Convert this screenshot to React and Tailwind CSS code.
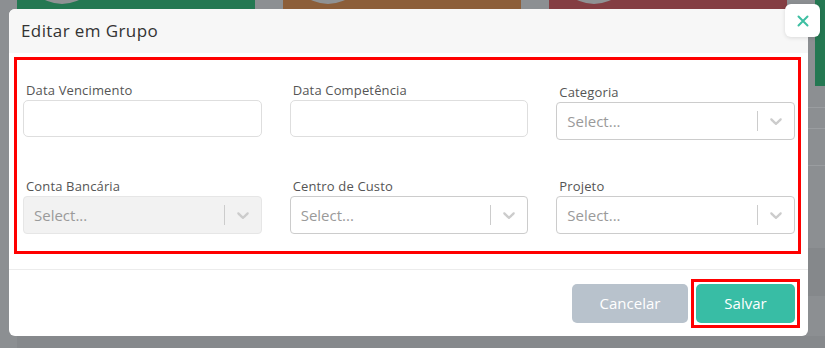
import React from "react";

function Chevron() {
  return (
    <svg width="20" height="20" viewBox="0 0 20 20" fill="#cccccc" aria-hidden="true">
      <path d="M4.516 7.548c0.436-0.446 1.043-0.481 1.576 0l3.908 3.747 3.908-3.747c0.533-0.481 1.141-0.446 1.574 0 0.436 0.445 0.408 1.197 0 1.615-0.406 0.418-4.695 4.502-4.695 4.502-0.217 0.223-0.502 0.335-0.787 0.335s-0.57-0.112-0.789-0.335c0 0-4.287-4.084-4.695-4.502s-0.436-1.17 0-1.615z" />
    </svg>
  );
}

function SelectBox({ disabled }) {
  return (
    <div
      className={
        disabled
          ? "flex h-[38px] items-center rounded-[4px] border border-[#e6e6e6] bg-[#f2f2f2]"
          : "flex h-[38px] items-center rounded-[4px] border border-[#cccccc] bg-white"
      }
    >
      <div className="flex-1 pl-[10px] text-[15px] text-[#9a9a9a]">Select...</div>
      <div className="h-[20px] w-px bg-[#cccccc]" />
      <div className="flex w-[36px] items-center justify-center">
        <Chevron />
      </div>
    </div>
  );
}

function Label({ children }) {
  return <div className="mb-[2px] h-[16px] pl-[3px] text-[13px] leading-[16px] tracking-[0.15px] text-[#555555]">{children}</div>;
}

function TextInput() {
  return <div className="h-[37px] rounded-[5px] border border-[#dedede] bg-white" />;
}

function Card({ color }) {
  return (
    <div className={`relative h-[9px] w-[238px] overflow-hidden ${color}`}>
      <div className="ml-[7px] mt-[-72px] h-[76px] w-[76px] rounded-full bg-[#8f9294]" />
    </div>
  );
}

export default function App() {
  return (
    <div className="relative flex h-[348px] w-[825px] flex-col overflow-hidden bg-[#8c8f92] font-['Open_Sans','Liberation_Sans',sans-serif]">
      {/* page behind the overlay */}
      <div className="flex items-start gap-[28px] pl-[17px]">
        <Card color="bg-[#247852]" />
        <Card color="bg-[#8c5e39]" />
        <Card color="bg-[#843e43]" />
        <div className="h-[86px] flex-1 bg-[#247852]" />
      </div>
      <div className="ml-auto mt-[21px] flex w-[17px] flex-col">
        <div className="h-px bg-[#9a9da0]" />
        <div className="mt-[20px] h-px bg-[#9a9da0]" />
        <div className="mt-[36px] h-px bg-[#9a9da0]" />
        <div className="mt-[82px] h-[48px] bg-[#85888b]" />
      </div>
      <div className="mt-auto ml-[17px] h-[12px] bg-[#86898c]" />

      {/* modal */}
      <div className="absolute left-[9px] top-[9px] flex h-[327px] w-[799px] flex-col rounded-[6px] bg-white">
        <div className="flex h-[44px] items-center rounded-t-[6px] bg-[#f7f7f7] px-[12px]">
          <h2 className="text-[17px] font-medium tracking-[0.4px] text-[#333333]">Editar em Grupo</h2>
        </div>
        <button className="absolute left-[776px] top-[-5px] flex h-[33px] w-[35px] items-center justify-center rounded-[6px] bg-white shadow-[0_1px_4px_rgba(0,0,0,0.12)]">
          <svg width="12" height="12" viewBox="0 0 12 12" fill="none" stroke="#3dbfa2" strokeWidth="2" strokeLinecap="round">
            <path d="M1.5 1.5l9 9M10.5 1.5l-9 9" />
          </svg>
        </button>

        <div className="pb-[15px] pl-[5px] pr-[7px] pt-[4px]">
          <div className="border-[3px] border-[#ff0000] pb-[17px] pl-[6px] pr-[3px] pt-[22px]">
            <div className="grid grid-cols-3 items-start gap-x-[28px] gap-y-[38px]">
              <div>
                <Label>Data Vencimento</Label>
                <TextInput />
              </div>
              <div>
                <Label>Data Competência</Label>
                <TextInput />
              </div>
              <div className="pt-[2px]">
                <Label>Categoria</Label>
                <div className="mt-[1px]">
                  <SelectBox />
                </div>
              </div>
              <div>
                <Label>Conta Bancária</Label>
                <SelectBox disabled />
              </div>
              <div>
                <Label>Centro de Custo</Label>
                <SelectBox />
              </div>
              <div>
                <Label>Projeto</Label>
                <SelectBox />
              </div>
            </div>
          </div>
        </div>

        <div className="flex items-center justify-end gap-[3px] border-t border-[#ececec] pb-[8px] pr-[8px] pt-[9px]">
          <button className="h-[39px] w-[116px] rounded-[5px] bg-[#b8c2cc] text-[15px] text-white">Cancelar</button>
          <div className="border-[3px] border-[#ff0000] p-[2px]">
            <button className="block h-[39px] w-[99px] rounded-[5px] bg-[#38bda5] text-[15px] text-white">Salvar</button>
          </div>
        </div>
      </div>
    </div>
  );
}
